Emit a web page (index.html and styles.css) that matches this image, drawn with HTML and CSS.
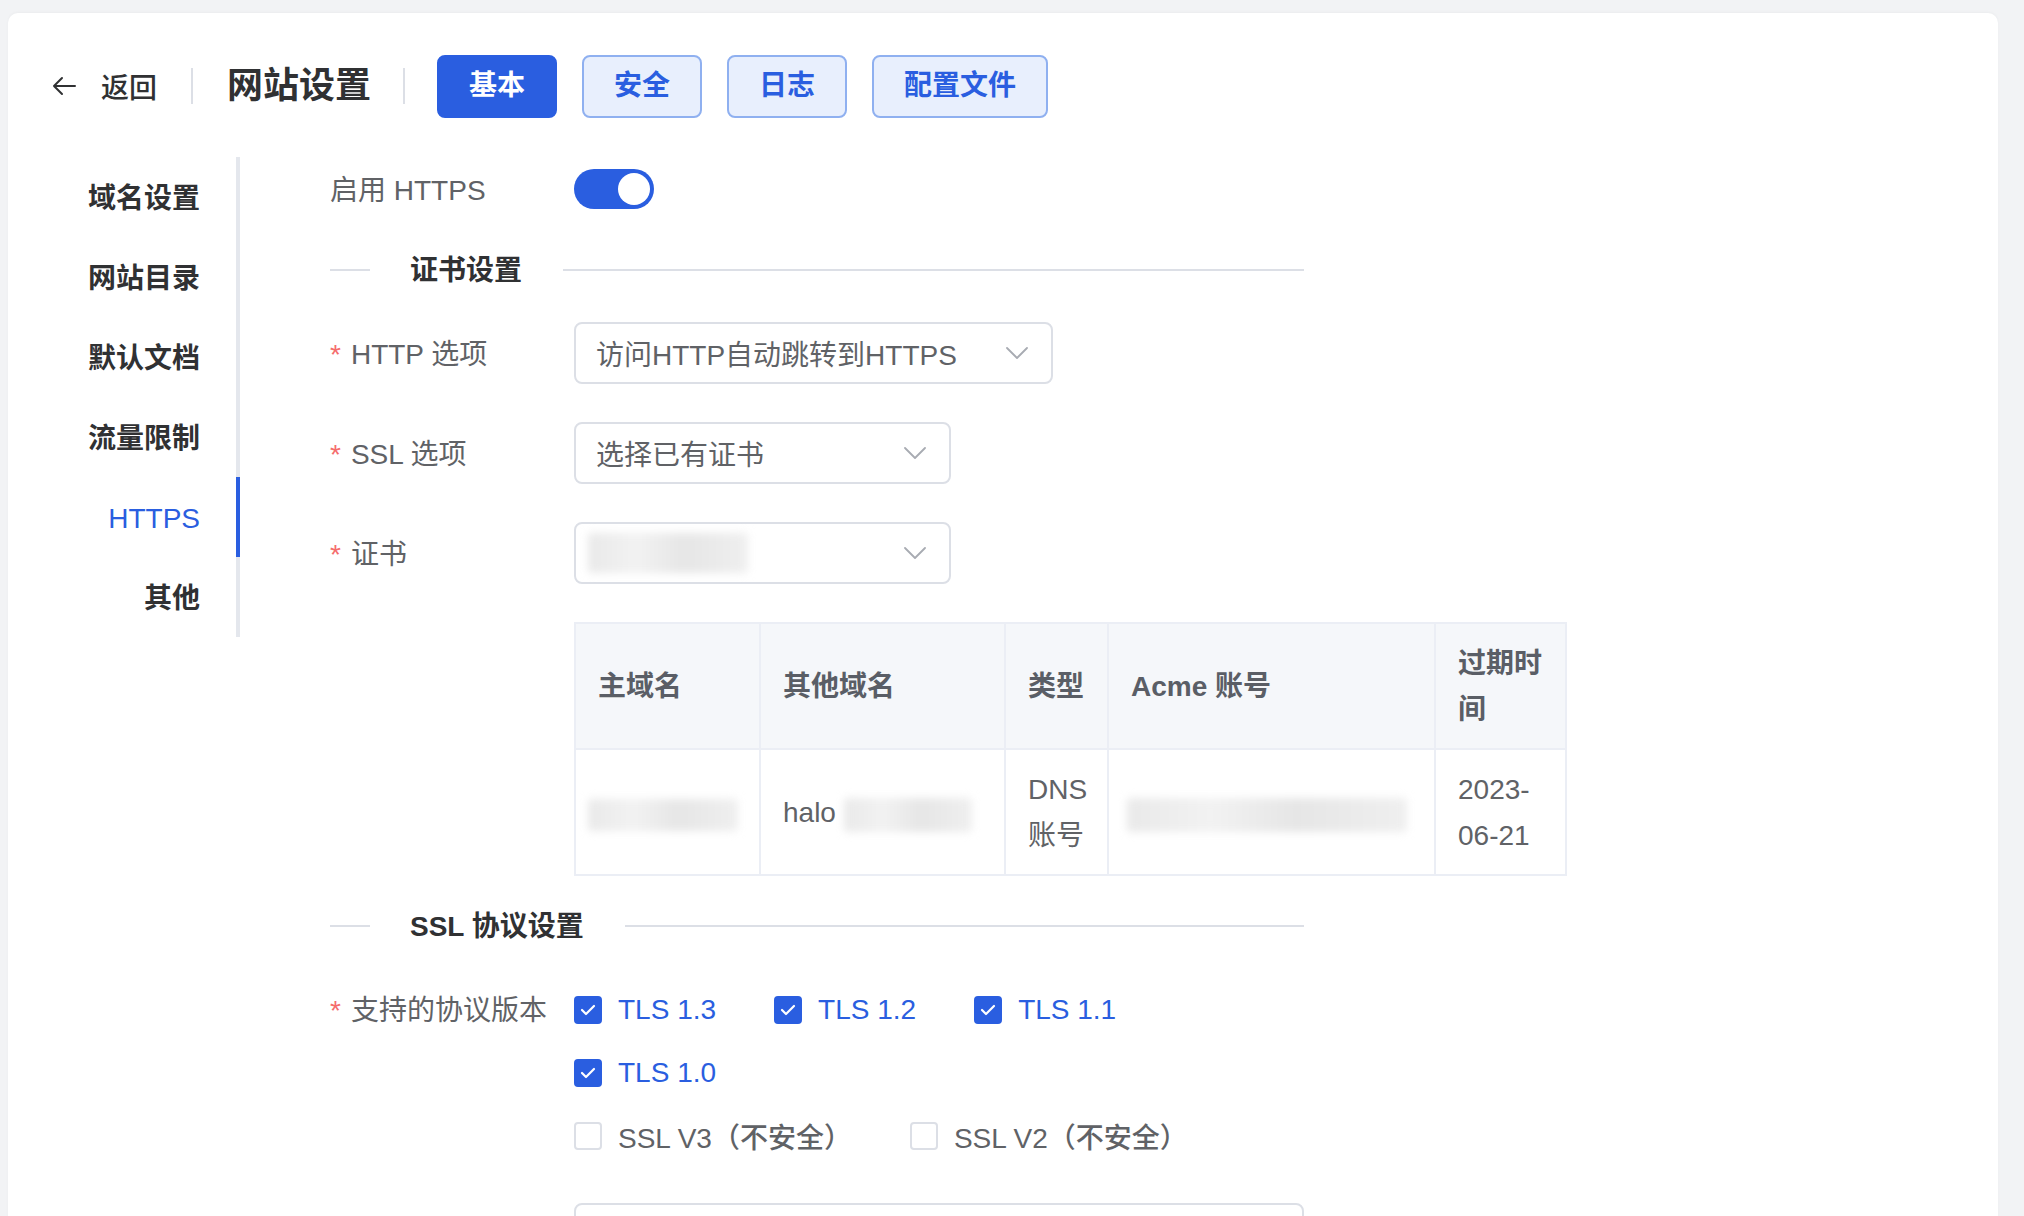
FILE: index.html
```html
<!DOCTYPE html>
<html lang="zh-CN">
<head>
<meta charset="utf-8">
<title>网站设置</title>
<link rel="stylesheet" href="styles.css">
</head>
<body>
<div class="page">
  <div class="card">
    <header class="header">
      <a class="back">
        <svg class="back-icon" width="24" height="20" viewBox="0 0 24 20"><path d="M23 10H2M10 2L2 10l8 8" fill="none" stroke="#303133" stroke-width="2" stroke-linecap="round" stroke-linejoin="round"/></svg>
        <span>返回</span>
      </a>
      <span class="vsep"></span>
      <h1 class="title">网站设置</h1>
      <span class="vsep vsep-2"></span>
      <div class="tabs">
        <button class="tab active">基本</button>
        <button class="tab">安全</button>
        <button class="tab">日志</button>
        <button class="tab">配置文件</button>
      </div>
    </header>

    <div class="main">
      <nav class="menu">
        <div class="menu-item">域名设置</div>
        <div class="menu-item">网站目录</div>
        <div class="menu-item">默认文档</div>
        <div class="menu-item">流量限制</div>
        <div class="menu-item active">HTTPS</div>
        <div class="menu-item">其他</div>
      </nav>

      <section class="content">
        <div class="form-item">
          <label class="label">启用 HTTPS</label>
          <div class="field">
            <span class="switch"><span class="knob"></span></span>
          </div>
        </div>

        <div class="divider"><span class="divider-text">证书设置</span></div>

        <div class="form-item">
          <label class="label"><span class="req">*</span>HTTP 选项</label>
          <div class="field">
            <div class="select select-wide">
              <span>访问HTTP自动跳转到HTTPS</span>
              <svg class="chev" width="22" height="12" viewBox="0 0 22 12"><path d="M1 1l10 10L21 1" fill="none" stroke="#a8abb2" stroke-width="1.8" stroke-linecap="round" stroke-linejoin="round"/></svg>
            </div>
          </div>
        </div>

        <div class="form-item">
          <label class="label"><span class="req">*</span>SSL 选项</label>
          <div class="field">
            <div class="select">
              <span>选择已有证书</span>
              <svg class="chev" width="22" height="12" viewBox="0 0 22 12"><path d="M1 1l10 10L21 1" fill="none" stroke="#a8abb2" stroke-width="1.8" stroke-linecap="round" stroke-linejoin="round"/></svg>
            </div>
          </div>
        </div>

        <div class="form-item">
          <label class="label"><span class="req">*</span>证书</label>
          <div class="field">
            <div class="select select-cert">
              <span class="blur blur-cert"></span>
              <svg class="chev" width="22" height="12" viewBox="0 0 22 12"><path d="M1 1l10 10L21 1" fill="none" stroke="#a8abb2" stroke-width="1.8" stroke-linecap="round" stroke-linejoin="round"/></svg>
            </div>
          </div>
        </div>

        <div class="form-item form-item-table">
          <div class="label"></div>
          <div class="field">
            <table class="table">
              <colgroup>
                <col class="c1"><col class="c2"><col class="c3"><col class="c4"><col class="c5">
              </colgroup>
              <thead>
                <tr><th>主域名</th><th>其他域名</th><th>类型</th><th>Acme 账号</th><th>过期时间</th></tr>
              </thead>
              <tbody>
                <tr>
                  <td><span class="blur blur-main"></span></td>
                  <td><span class="cell-inline">halo<span class="blur blur-other"></span></span></td>
                  <td>DNS 账号</td>
                  <td><span class="blur blur-acme"></span></td>
                  <td>2023-<wbr>06-21</td>
                </tr>
              </tbody>
            </table>
          </div>
        </div>

        <div class="divider"><span class="divider-text">SSL 协议设置</span></div>

        <div class="form-item form-item-checks">
          <label class="label"><span class="req">*</span>支持的协议版本</label>
          <div class="field checks">
            <div class="check-row">
              <span class="check checked"><span class="box"><svg width="16" height="12" viewBox="0 0 16 12"><path d="M2 6l4 4 8-8" fill="none" stroke="#fff" stroke-width="2.2" stroke-linecap="round" stroke-linejoin="round"/></svg></span><span class="check-text">TLS 1.3</span></span>
              <span class="check checked"><span class="box"><svg width="16" height="12" viewBox="0 0 16 12"><path d="M2 6l4 4 8-8" fill="none" stroke="#fff" stroke-width="2.2" stroke-linecap="round" stroke-linejoin="round"/></svg></span><span class="check-text">TLS 1.2</span></span>
              <span class="check checked"><span class="box"><svg width="16" height="12" viewBox="0 0 16 12"><path d="M2 6l4 4 8-8" fill="none" stroke="#fff" stroke-width="2.2" stroke-linecap="round" stroke-linejoin="round"/></svg></span><span class="check-text">TLS 1.1</span></span>
            </div>
            <div class="check-row">
              <span class="check checked"><span class="box"><svg width="16" height="12" viewBox="0 0 16 12"><path d="M2 6l4 4 8-8" fill="none" stroke="#fff" stroke-width="2.2" stroke-linecap="round" stroke-linejoin="round"/></svg></span><span class="check-text">TLS 1.0</span></span>
            </div>
            <div class="check-row">
              <span class="check"><span class="box"></span><span class="check-text">SSL V3（不安全）</span></span>
              <span class="check"><span class="box"></span><span class="check-text">SSL V2（不安全）</span></span>
            </div>
          </div>
        </div>

        <div class="form-item">
          <div class="label"></div>
          <div class="field">
            <div class="input-box"></div>
          </div>
        </div>
      </section>
    </div>
  </div>
</div>
</body>
</html>
```

FILE: styles.css
```css
* { box-sizing: border-box; }

html, body {
  margin: 0;
  height: 100%;
  overflow: hidden;
}

body {
  background: #f2f3f5;
  font-family: "Liberation Sans", "Noto Sans CJK SC", sans-serif;
  color: #303133;
}

.page {
  padding: 13px 26px 0 8px;
}

.card {
  background: #fff;
  border-radius: 10px 10px 0 0;
  min-height: 1300px;
  padding-top: 41px;
  box-shadow: 0 -1px 3px rgba(0, 0, 0, 0.03);
}

/* header */
.header {
  display: flex;
  align-items: center;
  height: 64px;
  padding-left: 44px;
}

.back {
  display: flex;
  align-items: center;
  gap: 25px;
  font-size: 28px;
  font-weight: 500;
  color: #303133;
}

.back-icon { display: block; }

.vsep {
  width: 2px;
  height: 36px;
  background: #dcdfe6;
  margin: 0 34px;
}

.vsep-2 { margin: 0 32px; }

.title {
  margin: 0;
  font-size: 36px;
  font-weight: 700;
  color: #303133;
  line-height: 1;
}

.tabs {
  display: flex;
  gap: 25px;
}

.tab {
  height: 63px;
  padding: 0 30px;
  border: 2px solid #8fb0f0;
  border-radius: 8px;
  background: #e8effd;
  color: #2a5ee0;
  font-family: inherit;
  font-size: 28px;
  font-weight: 700;
  line-height: 1;
}

.tab.active {
  background: #2a5ee0;
  border-color: #2a5ee0;
  color: #fff;
}

/* main */
.main {
  display: flex;
  margin-top: 39px;
}

.menu {
  width: 232px;
  height: 480px;
  border-right: 4px solid #e4e7ed;
  flex-shrink: 0;
}

.menu-item {
  height: 80px;
  padding-top: 4px;
  line-height: 76px;
  text-align: right;
  padding-right: 36px;
  margin-right: -4px;
  border-right: 4px solid transparent;
  font-size: 28px;
  font-weight: 700;
  color: #303133;
}

.menu-item.active {
  color: #2a5ee0;
  font-weight: 400;
  border-right-color: #2a5ee0;
}

.content {
  padding-left: 90px;
  padding-top: 1px;
  flex: 1;
}

/* form */
.form-item {
  display: flex;
  min-height: 62px;
  margin-bottom: 38px;
}

.label {
  width: 244px;
  height: 62px;
  flex-shrink: 0;
  padding-top: 3px;
  line-height: 59px;
  font-size: 28px;
  color: #606266;
}

.req {
  color: #f56c6c;
  margin-right: 10px;
}

.field {
  display: flex;
  align-items: center;
  min-height: 62px;
}

.switch {
  position: relative;
  width: 80px;
  height: 40px;
  border-radius: 20px;
  background: #2a5ee0;
  display: inline-block;
}

.knob {
  position: absolute;
  right: 4px;
  top: 4px;
  width: 32px;
  height: 32px;
  border-radius: 50%;
  background: #fff;
}

.divider {
  display: flex;
  align-items: center;
  width: 974px;
  height: 24px;
  margin-bottom: 40px;
}

.divider::before {
  content: "";
  width: 40px;
  height: 2px;
  background: #dcdfe6;
}

.divider::after {
  content: "";
  flex: 1;
  height: 2px;
  background: #dcdfe6;
}

.divider-text {
  padding: 2px 41px 0 40px;
  font-size: 28px;
  font-weight: 700;
  color: #303133;
  line-height: 24px;
}

.select {
  width: 377px;
  height: 62px;
  border: 2px solid #dcdfe6;
  border-radius: 8px;
  padding: 0 23px 0 20px;
  display: flex;
  align-items: center;
  justify-content: space-between;
  font-size: 28px;
  color: #606266;
}

.select-wide { width: 479px; }

.chev { display: block; flex-shrink: 0; }

.blur {
  display: inline-block;
  background: linear-gradient(90deg, #e9e9e9, #f2f2f2 30%, #e6e6e6 60%, #efefef);
  filter: blur(4px);
  border-radius: 4px;
}

.blur-cert { width: 160px; height: 40px; margin-left: -8px; }
.blur-main { width: 150px; height: 32px; margin-left: -10px; vertical-align: middle; }
.blur-other { width: 128px; height: 34px; margin-left: 8px; vertical-align: middle; }
.blur-acme { width: 280px; height: 34px; margin-left: -4px; vertical-align: middle; }

/* table */
.form-item-table { margin-bottom: 38px; }

.table {
  border-collapse: collapse;
  table-layout: fixed;
  width: 991px;
  font-size: 28px;
  color: #606266;
}

.c1 { width: 185px; }
.c2 { width: 245px; }
.c3 { width: 103px; }
.c4 { width: 327px; }
.c5 { width: 131px; }

.table th, .table td {
  border: 2px solid #ebeef5;
  padding: 17px 20px 15px 22px;
  line-height: 46px;
  text-align: left;
  vertical-align: middle;
}

.table th {
  background: #f5f7fa;
  font-weight: 700;
  color: #5a5e66;
}

.table td { height: 125px; }

.cell-inline { white-space: nowrap; }

/* checkboxes */
.form-item-checks { margin-bottom: 36px; }

.checks {
  flex-direction: column;
  align-items: flex-start;
}

.check-row {
  display: flex;
  height: 63px;
  align-items: center;
}

.check {
  display: flex;
  align-items: center;
  margin-right: 58px;
  font-size: 28px;
  font-weight: 500;
  color: #606266;
}

.box {
  width: 28px;
  height: 28px;
  border: 2px solid #dcdfe6;
  border-radius: 4px;
  background: #fff;
  display: flex;
  align-items: center;
  justify-content: center;
}

.check.checked .box {
  background: #2a5ee0;
  border-color: #2a5ee0;
}

.check.checked { color: #2a5ee0; }

.check-text { padding-left: 16px; }

.form-item-checks .label { height: 63px; line-height: 61px; padding-top: 2px; }

.input-box {
  width: 730px;
  height: 62px;
  border: 2px solid #dcdfe6;
  border-radius: 8px;
}
```
